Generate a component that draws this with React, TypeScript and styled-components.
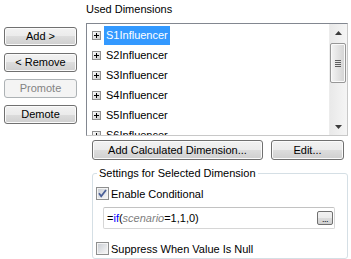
import React from 'react';
import styled, { createGlobalStyle, css } from 'styled-components';

const Global = createGlobalStyle`
  body {
    margin: 0;
    background: #ffffff;
    font-family: "Liberation Sans", Arial, sans-serif;
    font-size: 11px;
    color: #000000;
  }
`;

const Dialog = styled.div`
  display: flex;
  width: 351px;
  height: 259px;
  overflow: hidden;
  background: #ffffff;
`;

const LeftCol = styled.div`
  display: flex;
  flex-direction: column;
  gap: 7px;
  padding: 27px 0 0 4px;
  width: 73px;
  flex-shrink: 0;
`;

const WinButton = styled.button<{ $w?: number; $h?: number }>`
  box-sizing: border-box;
  width: ${(p) => p.$w ?? 73}px;
  height: ${(p) => p.$h ?? 19}px;
  padding: 0;
  border: 1px solid #707070;
  border-radius: 3px;
  background: linear-gradient(#f2f2f2 0%, #ebebeb 50%, #dddddd 50%, #cfcfcf 100%);
  box-shadow: inset 0 0 0 1px #fbfbfb;
  font-family: "Liberation Sans", Arial, sans-serif;
  font-size: 11px;
  color: #000000;
  line-height: 1;
  flex-shrink: 0;

  &:disabled {
    border-color: #adb2b5;
    background: #f4f4f4;
    box-shadow: none;
    color: #838383;
  }
`;

const RightCol = styled.div`
  display: flex;
  flex-direction: column;
  margin-left: 9px;
  width: 262px;
`;

const Caption = styled.div`
  padding-top: 3px;
  height: 13px;
  line-height: 13px;
  margin-bottom: 7px;
`;

const ListBox = styled.div`
  box-sizing: border-box;
  display: flex;
  height: 113px;
  border: 1px solid #828790;
  border-right-color: #c8c8c8;
  border-bottom-color: #c8c8c8;
`;

const Rows = styled.div`
  flex: 1;
  overflow: hidden;
  padding: 1px 0 0 5px;
`;

const Row = styled.div`
  display: flex;
  align-items: center;
  height: 20px;
  gap: 3px;
`;

const ItemText = styled.span<{ $selected?: boolean }>`
  padding: 0 2px;
  line-height: 19px;
  ${(p) =>
    p.$selected &&
    css`
      background: #3399ff;
      color: #ffffff;
    `}
`;

const ScrollBar = styled.div`
  display: flex;
  flex-direction: column;
  width: 17px;
  background: linear-gradient(to right, #e9e9e9, #f5f5f5);
  border-left: 1px solid #ececec;
`;

const ArrowCell = styled.div`
  display: flex;
  align-items: center;
  justify-content: center;
  height: 17px;
`;

const Track = styled.div`
  flex: 1;
  display: flex;
  flex-direction: column;
  padding-top: 2px;
`;

const Thumb = styled.div`
  box-sizing: border-box;
  margin: 0 1px 0 0;
  height: 40px;
  border: 1px solid #979797;
  border-radius: 2px;
  background: linear-gradient(to right, #f4f4f4, #e3e3e3 50%, #d3d3d3);
  box-shadow: inset 0 0 0 1px #fafafa;
  display: flex;
  flex-direction: column;
  align-items: center;
  justify-content: center;
  gap: 1px;
`;

const Grip = styled.span`
  display: block;
  width: 6px;
  height: 1px;
  background: #5f5f5f;
`;

const ButtonRow = styled.div`
  display: flex;
  gap: 8px;
  margin: 4px 0 0 6px;
`;

const Group = styled.fieldset`
  box-sizing: border-box;
  margin: 7px 0 0 6px;
  padding: 0 0 0 3px;
  width: 256px;
  height: 110px;
  border: 1px solid #d5dfe5;
  border-radius: 3px;
  min-inline-size: 0;
`;

const Legend = styled.legend`
  margin-left: 1px;
  padding: 0 2px;
  line-height: 13px;
`;

const CheckRow = styled.label`
  display: flex;
  align-items: center;
  gap: 2px;
  height: 13px;
  margin-top: ${(p: { $top: number }) => p.$top}px;
`;

const ExprBox = styled.div`
  box-sizing: border-box;
  display: flex;
  align-items: center;
  justify-content: space-between;
  margin: 7px 0 0 7px;
  width: 232px;
  height: 22px;
  padding: 0 1px 0 3px;
  border: 1px solid #d6d6d6;
  border-top-color: #c2c2c2;
  border-radius: 2px;
`;

const Fn = styled.span`
  color: #0000ff;
`;

const Field = styled.span`
  color: #808080;
  font-style: italic;
`;

const DotsButton = styled.span`
  box-sizing: border-box;
  display: flex;
  align-items: flex-end;
  justify-content: center;
  width: 16px;
  height: 14px;
  padding-bottom: 2px;
  border: 1px solid #707070;
  border-radius: 2px;
  background: linear-gradient(#f2f2f2 0%, #ebebeb 50%, #dddddd 50%, #cfcfcf 100%);
  font-size: 9px;
  line-height: 6px;
  letter-spacing: -0.5px;
`;

const Expander = () => (
  <svg width="9" height="9" viewBox="0 0 9 9">
    <defs>
      <linearGradient id="exp" x1="0" y1="0" x2="1" y2="1">
        <stop offset="0" stopColor="#ffffff" />
        <stop offset="1" stopColor="#c6c6c6" />
      </linearGradient>
    </defs>
    <rect x="0.5" y="0.5" width="8" height="8" fill="url(#exp)" stroke="#919191" />
    <rect x="2" y="4" width="5" height="1" fill="#000" />
    <rect x="4" y="2" width="1" height="5" fill="#000" />
  </svg>
);

const CheckBox = ({ checked }: { checked?: boolean }) => (
  <svg width="13" height="13" viewBox="0 0 13 13">
    <defs>
      <linearGradient id="cb" x1="0" y1="0" x2="1" y2="1">
        <stop offset="0" stopColor="#cbcfd5" />
        <stop offset="1" stopColor="#f6f6f6" />
      </linearGradient>
    </defs>
    <rect x="0.5" y="0.5" width="12" height="12" fill="#f4f4f4" stroke="#8e8f8f" />
    <rect x="2" y="2" width="9" height="9" fill="url(#cb)" />
    {checked && (
      <path d="M3 6.2 L5.2 9.2 L10 3" fill="none" stroke="#4a5f97" strokeWidth="1.8" />
    )}
  </svg>
);

const items = ['S1Influencer', 'S2Influencer', 'S3Influencer', 'S4Influencer', 'S5Influencer', 'S6Influencer'];

export default function App() {
  return (
    <Dialog>
      <Global />
      <LeftCol>
        <WinButton>Add &gt;</WinButton>
        <WinButton>&lt; Remove</WinButton>
        <WinButton disabled>Promote</WinButton>
        <WinButton>Demote</WinButton>
      </LeftCol>
      <RightCol>
        <Caption>Used Dimensions</Caption>
        <ListBox>
          <Rows>
            {items.map((name, i) => (
              <Row key={name}>
                <Expander />
                <ItemText $selected={i === 0}>{name}</ItemText>
              </Row>
            ))}
          </Rows>
          <ScrollBar>
            <ArrowCell>
              <svg width="7" height="4" viewBox="0 0 7 4">
                <path d="M0 4 L3.5 0 L7 4 Z" fill="#3c3c3c" />
              </svg>
            </ArrowCell>
            <Track>
              <Thumb>
                <Grip />
                <Grip />
                <Grip />
                <Grip />
              </Thumb>
            </Track>
            <ArrowCell>
              <svg width="7" height="4" viewBox="0 0 7 4">
                <path d="M0 0 L7 0 L3.5 4 Z" fill="#3c3c3c" />
              </svg>
            </ArrowCell>
          </ScrollBar>
        </ListBox>
        <ButtonRow>
          <WinButton $w={171} $h={20}>Add Calculated Dimension...</WinButton>
          <WinButton $w={73} $h={20}>Edit...</WinButton>
        </ButtonRow>
        <Group>
          <Legend>Settings for Selected Dimension</Legend>
          <CheckRow $top={7}>
            <CheckBox checked />
            Enable Conditional
          </CheckRow>
          <ExprBox>
            <span>
              =<Fn>if</Fn>(<Field>scenario</Field>=1,1,0)
            </span>
            <DotsButton>...</DotsButton>
          </ExprBox>
          <CheckRow $top={13}>
            <CheckBox />
            Suppress When Value Is Null
          </CheckRow>
        </Group>
      </RightCol>
    </Dialog>
  );
}
